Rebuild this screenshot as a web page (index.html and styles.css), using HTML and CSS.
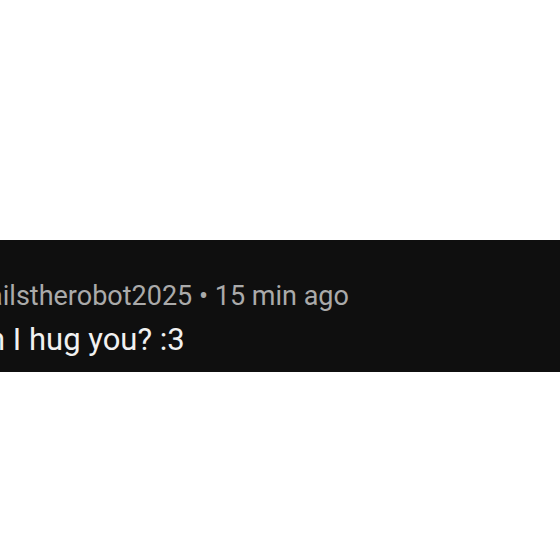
FILE: index.html
```html
<!DOCTYPE html>
<html>
  <head>
    <meta charset="UTF-8" />
    <title>Comment</title>
    <link rel="stylesheet" href="styles.css">
  </head>
  <body>
    <!-- Cropped comment strip -->
    <div class="comment">
      <div class="comment-body">
        <div class="meta">
          <span class="author">@tailstherobot2025</span>
          <span class="dot">•</span>
          <span class="time">15 min ago</span>
        </div>
        <div class="text">Can I hug you? :3</div>
      </div>
    </div>
  </body>
</html>
```

FILE: styles.css
```css
body {
  margin: 0;
  padding: 240px 0 0;
  background-color: #ffffff;
  font-family: Roboto, 'Noto Sans', sans-serif;
  overflow: hidden;
  height: 560px;
  box-sizing: border-box;
}

.comment {
  height: 132px;
  box-sizing: border-box;
  padding-top: 40px;
  background-color: #0f0f0f;
  overflow: hidden;
}

.comment-body {
  margin-left: -49px;
  white-space: nowrap;
}

.meta {
  margin-left: 4px;
  color: #aaaaaa;
  font-size: 27px;
  line-height: 32px;
}

.text {
  color: #f1f1f1;
  font-size: 31px;
  line-height: 38px;
  margin-top: 9px;
}
```
